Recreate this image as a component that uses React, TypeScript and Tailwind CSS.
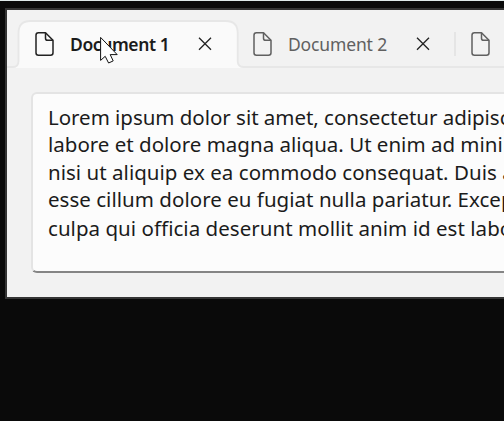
import React from "react";

function FileIcon({ className }: { className: string }) {
  return (
    <svg width="20" height="26" viewBox="0 0 20 26" fill="none" stroke="currentColor" strokeWidth="1.5" strokeLinejoin="round" className={className}>
      <path d="M3.4 1.75H10.5L18 9.3V21.8Q18 24.25 15.5 24.25H3.4Q1 24.25 1 21.8V4.2Q1 1.75 3.4 1.75Z" />
      <path d="M10.5 1.75V7.2Q10.5 9.3 12.7 9.3H18" />
    </svg>
  );
}

function CloseIcon() {
  return (
    <svg width="14" height="14" viewBox="0 0 14 14" fill="none" stroke="#222" strokeWidth="1.3">
      <path d="M1 0.8L13 12.8M13 0.8L1 12.8" />
    </svg>
  );
}

const lines = [
  { text: "Lorem ipsum dolor sit amet, consectetur adipisc", className: "h-[27px] tracking-[-0.03px]" },
  { text: "labore et dolore magna aliqua. Ut enim ad mini", className: "h-7" },
  { text: "nisi ut aliquip ex ea commodo consequat. Duis a", className: "h-[27px] tracking-[0.03px]" },
  { text: "esse cillum dolore eu fugiat nulla pariatur. Excep", className: "h-[29px] tracking-[0.03px]" },
  { text: "culpa qui officia deserunt mollit anim id est labo", className: "h-7 tracking-[0.04px]" },
];

export default function App() {
  return (
    <div className="h-[421px] w-[504px] overflow-hidden border-t border-[#dfe9e9] bg-[#0a0a0a] pt-[7px] pl-[5px] font-['Noto_Sans','Open_Sans',sans-serif]">
      <div className="h-[291px] w-[499px] overflow-hidden border-y-2 border-l-2 border-[#353535] bg-[#f2f2f2]">
        <div className="relative flex h-[58px] pt-[10px]">
          <svg width="497" height="48" viewBox="0 0 497 48" fill="none" className="absolute top-[10px] left-0">
            <path d="M7 48Q11.5 47 11.5 40V12Q11.5 1 23.5 1H217.7Q230.7 1 230.7 12V40Q230.7 47 236 48Z" fill="#fafafa" />
            <path d="M0 47H6Q11.5 47 11.5 41V13Q11.5 1 23.5 1H218.7Q230.7 1 230.7 13V41Q230.7 47 236.7 47H497" stroke="#e7e7e7" strokeWidth="1.8" />
            <path d="M12.4 47H229.8" stroke="#fafafa" strokeWidth="2" />
          </svg>
          <div className="relative flex h-12 w-[231px] items-center pl-[28px]">
            <FileIcon className="text-[#222]" />
            <span className="ml-[15px] w-[120px] pt-px text-[17.5px] font-semibold tracking-[-0.4px] whitespace-nowrap text-[#1b1b1b]">Document 1</span>
            <span className="ml-[8px]"><CloseIcon /></span>
          </div>
          <div className="relative flex h-12 w-[216px] items-center pl-[15px]">
            <FileIcon className="text-[#606060]" />
            <span className="ml-[15px] w-[120px] pt-px text-[17.5px] tracking-[-0.15px] whitespace-nowrap text-[#606060]">Document 2</span>
            <span className="ml-[8px]"><CloseIcon /></span>
          </div>
          <div className="relative mt-3 h-6 w-0.5 bg-[#e5e5e5]" />
          <div className="relative flex h-12 items-center pl-[15px]">
            <FileIcon className="text-[#606060]" />
          </div>
          <svg width="20" height="29" viewBox="0 0 20 29" className="absolute top-[26px] left-[93px]">
            <path d="M0.6 1.4V24.4L5.2 20.3L8.6 27L13.2 24.9L10.2 18.6H17.2Z" fill="#fff" stroke="#111" strokeWidth="1" />
          </svg>
        </div>
        <div className="mt-6 ml-6 h-[181px] w-[490px] overflow-hidden rounded-md border-2 border-[#e4e4e4] border-b-[#858585] bg-[#fcfcfc] pt-[9px] pl-[15px] text-[20.5px] leading-[28px] text-[#1b1b1b]">
          {lines.map((line) => (
            <p key={line.text} className={`whitespace-nowrap ${line.className}`}>{line.text}</p>
          ))}
        </div>
      </div>
    </div>
  );
}
